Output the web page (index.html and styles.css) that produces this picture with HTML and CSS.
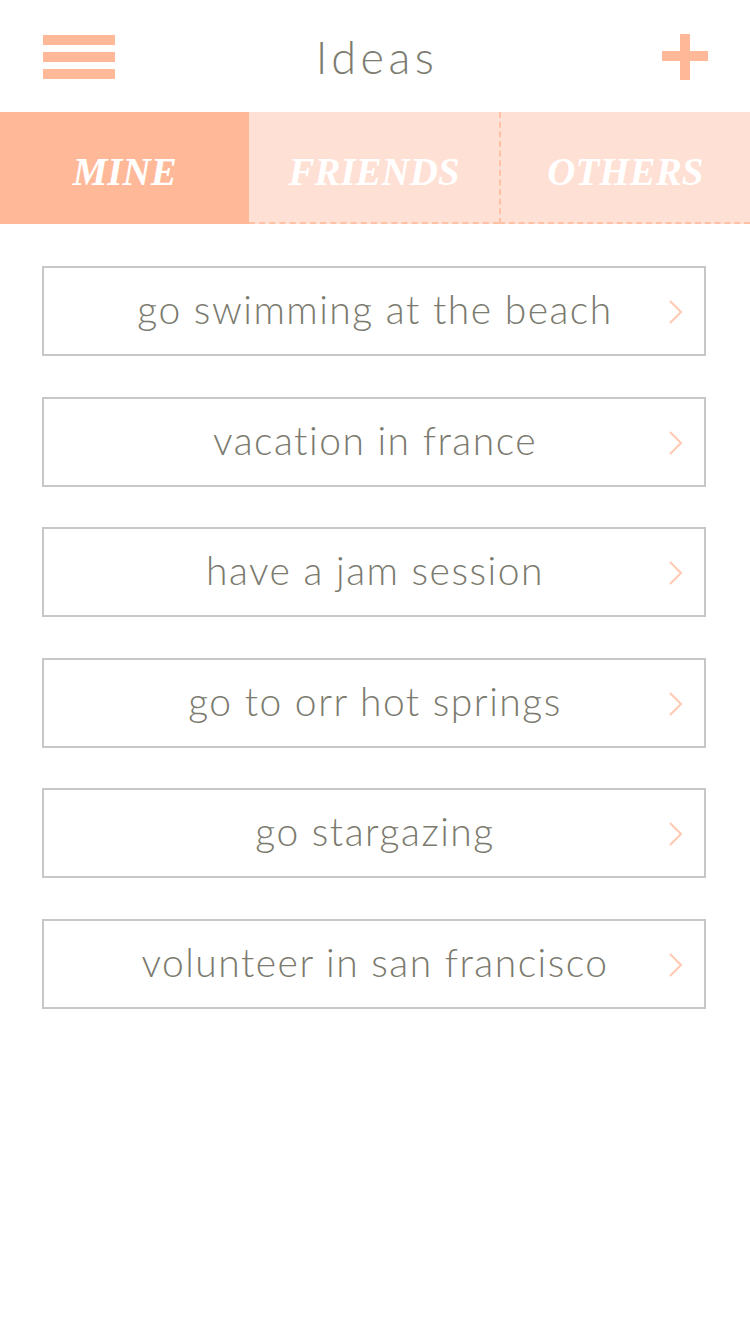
FILE: index.html
```html
<!DOCTYPE html>
<html>
<head>
<meta charset="utf-8">
<link rel="stylesheet" href="styles.css">
</head>
<body>
<div class="app">
  <header class="topbar">
    <div class="menu">
      <span class="bar"></span><span class="bar"></span><span class="bar"></span>
    </div>
    <h1 class="title">Ideas</h1>
    <div class="plus">
      <svg width="46" height="46" viewBox="0 0 46 46"><rect x="18" y="0" width="10" height="46" fill="#ffb999"/><rect x="0" y="17" width="46" height="10" fill="#ffb999"/></svg>
    </div>
  </header>
  <nav class="tabs">
    <div class="tab active">MINE</div>
    <div class="tab">FRIENDS</div>
    <div class="tab last">OTHERS</div>
  </nav>
  <ul class="list">
    <li class="item"><span class="label">go swimming at the beach</span><svg class="chev" width="16" height="26" viewBox="0 0 16 26"><path d="M2 2 L13 13 L2 24" fill="none" stroke="#ffc9b0" stroke-width="2"/></svg></li>
    <li class="item"><span class="label">vacation in france</span><svg class="chev" width="16" height="26" viewBox="0 0 16 26"><path d="M2 2 L13 13 L2 24" fill="none" stroke="#ffc9b0" stroke-width="2"/></svg></li>
    <li class="item"><span class="label">have a jam session</span><svg class="chev" width="16" height="26" viewBox="0 0 16 26"><path d="M2 2 L13 13 L2 24" fill="none" stroke="#ffc9b0" stroke-width="2"/></svg></li>
    <li class="item"><span class="label">go to orr hot springs</span><svg class="chev" width="16" height="26" viewBox="0 0 16 26"><path d="M2 2 L13 13 L2 24" fill="none" stroke="#ffc9b0" stroke-width="2"/></svg></li>
    <li class="item"><span class="label">go stargazing</span><svg class="chev" width="16" height="26" viewBox="0 0 16 26"><path d="M2 2 L13 13 L2 24" fill="none" stroke="#ffc9b0" stroke-width="2"/></svg></li>
    <li class="item"><span class="label">volunteer in san francisco</span><svg class="chev" width="16" height="26" viewBox="0 0 16 26"><path d="M2 2 L13 13 L2 24" fill="none" stroke="#ffc9b0" stroke-width="2"/></svg></li>
  </ul>
</div>
</body>
</html>
```
FILE: styles.css
```css
* { box-sizing: border-box; }
html, body { margin: 0; padding: 0; background: #fff; }
.app { width: 750px; min-height: 1334px; font-family: "Lato", "Open Sans", sans-serif; }
.topbar {
  height: 112px;
  display: flex;
  align-items: center;
  justify-content: space-between;
  padding: 0 43px;
  position: relative;
}
.menu { width: 72px; height: 44px; display: flex; flex-direction: column; justify-content: space-between; margin-top: 2px; }
.bar { display: block; height: 10px; background: #ffb999; }
.title {
  margin: 0;
  font-weight: 300;
  font-size: 45px;
  color: #7d7c70;
  letter-spacing: 4.5px;
  position: absolute;
  left: 0; right: 0; top: 27px;
  padding-left: 4px;
  text-align: center;
  line-height: 60px;
}
.plus { width: 46px; height: 46px; margin-right: -1px; margin-top: 2px; }
.plus svg { display: block; }
.tabs { display: flex; height: 112px; }
.tab {
  flex: 1;
  display: flex; align-items: center; justify-content: center;
  background: #ffe0d4;
  color: #fff;
  font-family: "Liberation Serif", "DejaVu Serif", serif;
  font-style: italic; font-weight: bold;
  font-size: 39px;
  border-bottom: 2px dashed #ffc1a6;
  padding-top: 8px;
}
.tab.active { background: #ffb999; border-bottom: 2px solid #ffb999; }
.tab.last { border-left: 2px dashed #ffc1a6; }
.list { list-style: none; margin: 0; padding: 42px 44px 0 42px; display: flex; flex-direction: column; gap: 40.6px; }
.item {
  height: 90px;
  border: 2px solid #c8c6c6;
  display: flex; align-items: center; justify-content: center;
  position: relative;
}
.label { font-size: 39px; font-weight: 300; color: #7b7a6e; letter-spacing: 1.5px; margin-top: -4px; padding-left: 2px; }
.chev { position: absolute; right: 20px; top: 31px; }
```
